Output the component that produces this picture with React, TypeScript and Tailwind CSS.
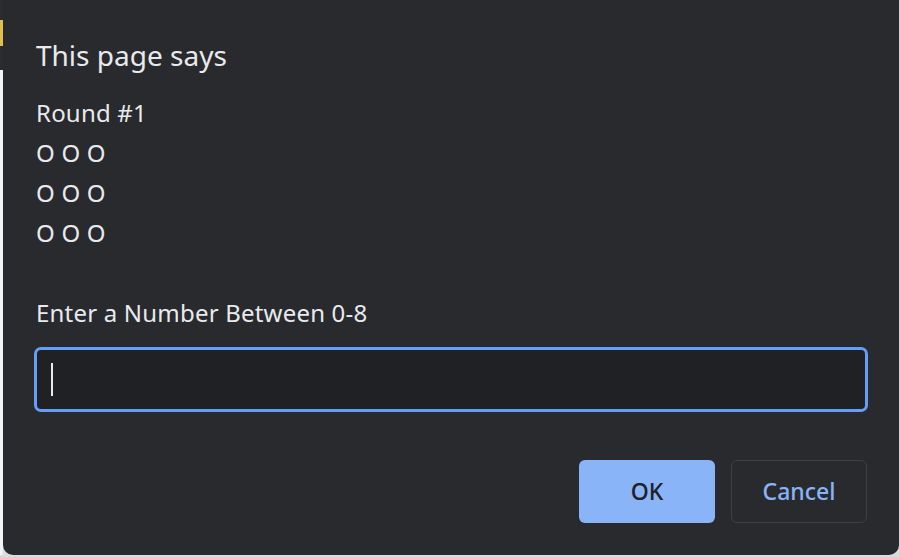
export default function App() {
  const lines = ['Round #1', 'O O O', 'O O O', 'O O O', '', 'Enter a Number Between 0-8'];
  return (
    <div className="w-[899px] h-[557px] flex flex-col bg-[#dcdcdc] overflow-hidden" style={{ fontFamily: '"Noto Sans", "Open Sans", sans-serif' }}>
      <div className="flex h-[555px]">
        {/* page peeking behind the dialog */}
        <div className="w-[3px] flex flex-col">
          <div className="h-[20px] bg-[#2b2c2f]" />
          <div className="h-[26px] bg-[#e2bf4c]" />
          <div className="h-[24px] bg-[#2b2c2f]" />
          <div className="flex-1 bg-[#f3f3f3]" />
        </div>

        {/* dialog */}
        <div className="flex-1 bg-[#292a2d] rounded-b-[10px] px-[31px] pt-[37px] flex flex-col text-[#e8eaed]">
          <h1 className="text-[28px] leading-[36px] pl-[2px]">This page says</h1>
          <div className="mt-[20px] text-[24px] leading-[40px] pl-[2px] tracking-[0.2px]">
            {lines.map((l, i) => (
              <div key={i} className="h-[40px]">{l}</div>
            ))}
          </div>
          <div className="mt-[14px] h-[65px] rounded-[7px] border-[3px] border-[#669df6] bg-[#202124] flex items-center pl-[14px]">
            <div className="w-[2px] h-[33px] bg-[#e8eaed]" />
          </div>
          <div className="mt-[48px] flex justify-end gap-[16px] pr-[1px]">
            <button className="w-[136px] h-[63px] rounded-[6px] bg-[#8ab4f8] text-[#202124] text-[23px] font-medium">OK</button>
            <button className="w-[136px] h-[63px] rounded-[6px] border border-[#3c4043] text-[#8ab4f8] text-[23px] font-medium">Cancel</button>
          </div>
        </div>
      </div>
      <div className="h-[2px] bg-[#dcdcdc]" />
    </div>
  );
}
